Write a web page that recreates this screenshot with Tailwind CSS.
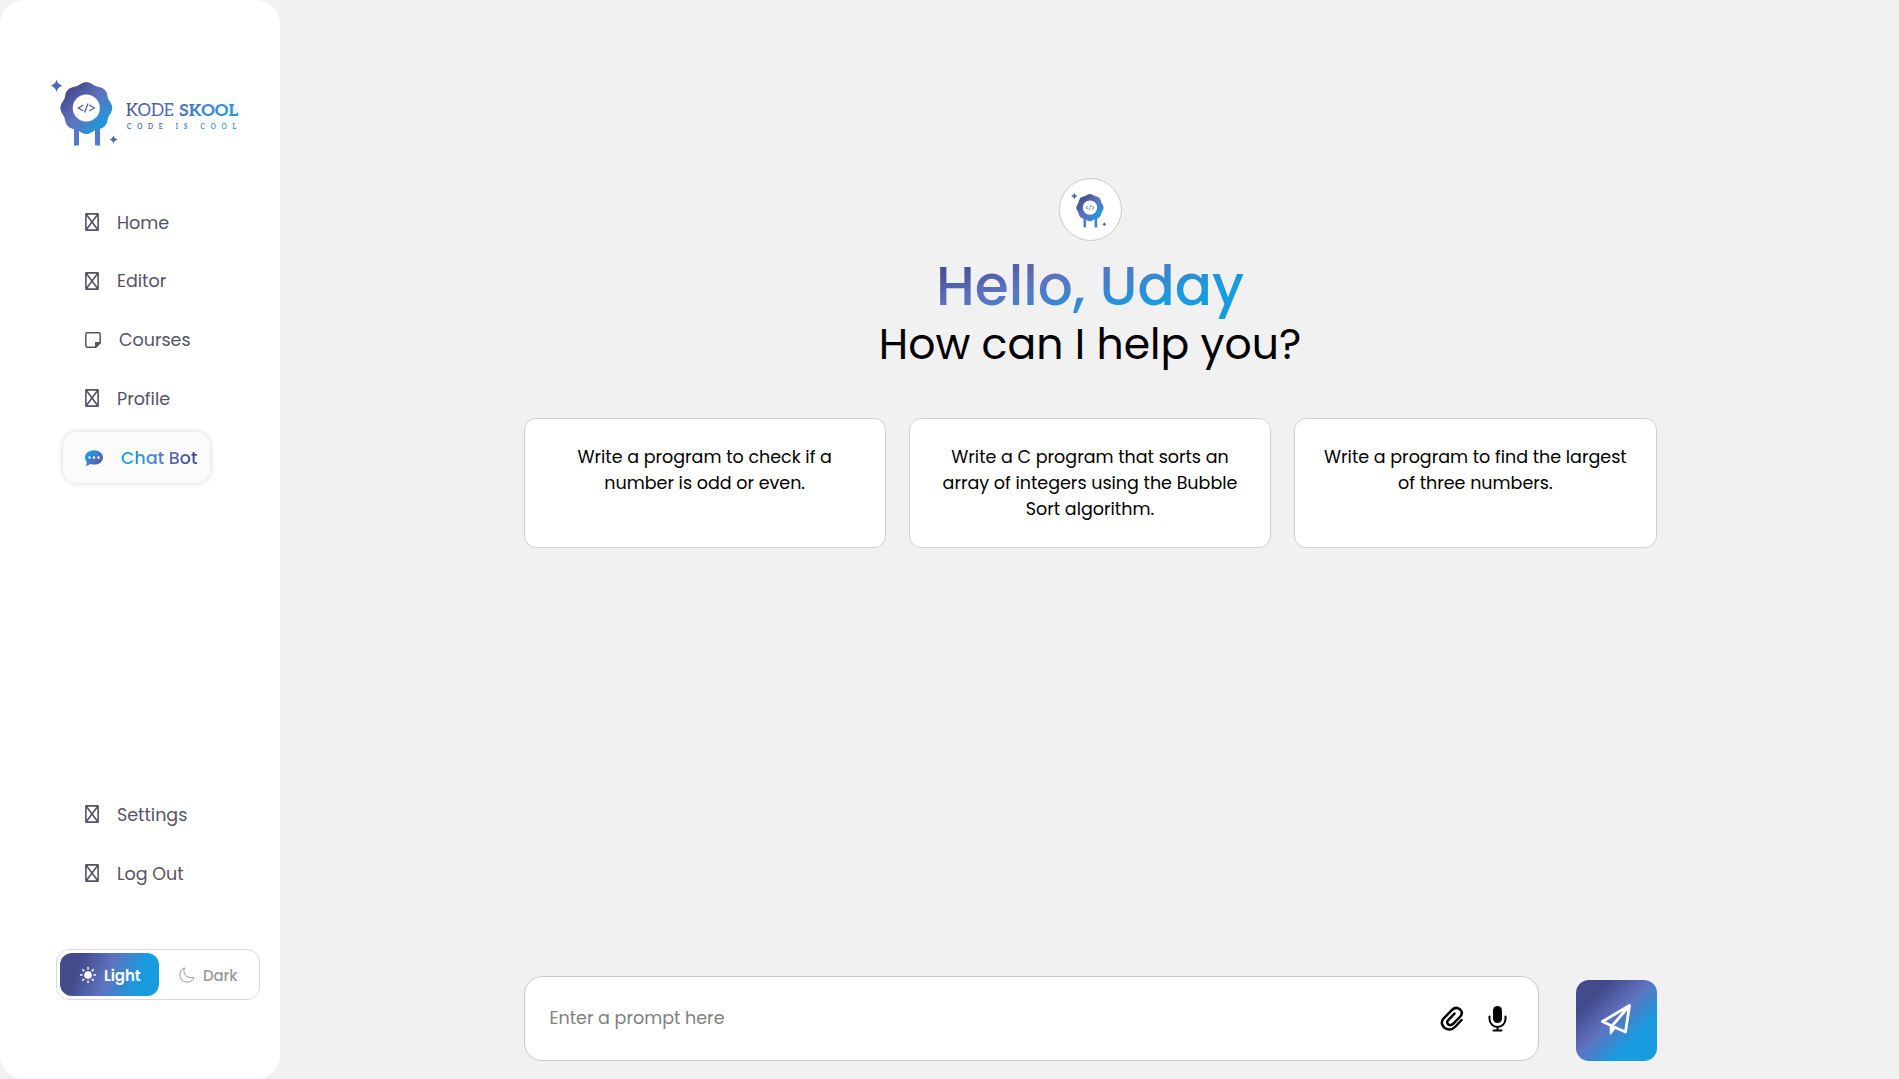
<!DOCTYPE html>
<html lang="en">
<head>
<meta charset="utf-8">
<title>Kode Skool</title>
<script src="https://cdn.jsdelivr.net/npm/@tailwindcss/browser@4"></script>
</head>
<body class="h-screen overflow-hidden bg-[#f1f1f1] font-['Poppins','Inter',sans-serif] text-black">
<svg class="absolute h-0 w-0">
  <defs>
    <linearGradient id="g" x1="0" y1="0" x2="1" y2="1"><stop offset=".15" stop-color="#434b8c"/><stop offset=".5" stop-color="#5f72bf"/><stop offset=".85" stop-color="#189bdf"/></linearGradient>
    <linearGradient id="gl" x1="0" y1="0" x2="1" y2="1"><stop offset="0" stop-color="#5f72bf"/><stop offset="1" stop-color="#4a7fd6"/></linearGradient>
    <linearGradient id="gt" gradientUnits="userSpaceOnUse" x1="126" y1="0" x2="238" y2="12"><stop offset="0" stop-color="#454e93"/><stop offset=".5" stop-color="#5270b9"/><stop offset="1" stop-color="#2b93dc"/></linearGradient>
    <linearGradient id="gc" x1="0" y1="0" x2="1" y2="1"><stop offset=".2" stop-color="#189bdf"/><stop offset=".6" stop-color="#5570bd"/><stop offset="1" stop-color="#434b8c"/></linearGradient>
    <g id="sheep">
      <path fill="url(#gl)" d="M-12.3 18h5v19.200l-5 .6zM8.700 18h5v19.800l-5-.6z"/>
      <path fill="url(#g)" d="M24.500-4.900Q27.500 0 24.500 4.900Q21.200 8.800 20.800 13.850Q19.450 19.450 13.850 20.800Q8.800 21.200 4.900 24.500Q0 27.500-4.900 24.500Q-8.800 21.200-13.850 20.800Q-19.450 19.450-20.800 13.850Q-21.200 8.800-24.500 4.900Q-27.500 0-24.500-4.900Q-21.200-8.800-20.800-13.850Q-19.450-19.450-13.850-20.800Q-8.800-21.200-4.900-24.500Q0-27.500 4.900-24.500Q8.800-21.200 13.850-20.800Q19.450-19.450 20.800-13.850Q21.200-8.800 24.500-4.900Z"/>
      <circle r="13.600" fill="#fff"/>
      <path fill="none" stroke="#4d61ad" stroke-width="1.300" d="M-3-3l-5 3 5 3M3-3l5 3-5 3M1.700-4.500l-3.400 9"/>
      <path fill="#4e66b4" d="M-29.800-28.500q1 5 6 6.200q-5 1.200-6 6.200q-1-5-6-6.200q5-1.200 6-6.200zM27.200 27.200q.7 3.500 4.300 4.300q-3.600.8-4.300 4.300q-.7-3.500-4.300-4.300q3.600-.8 4.300-4.300z"/>
    </g>
    <symbol id="tofu" viewBox="0 0 14 18"><path fill="none" stroke="#555268" stroke-width="1.600" stroke-linejoin="round" d="M.9.900h12.200v16.200H.9zM1 1l12 16M13 1L1 17"/></symbol>
  </defs>
</svg>
<div class="flex h-full">
  <aside class="flex w-[280px] shrink-0 flex-col rounded-3xl bg-white">
    <svg class="mt-[60px] h-[110px] w-[280px]" viewBox="0 60 280 110">
      <use href="#sheep" x="86.300" y="108"/>
      <g fill="url(#gt)" font-family="'Aleo','Roboto Slab','Zilla Slab','DejaVu Serif',serif">
        <text x="126" y="115.500" font-size="17" textLength="48" lengthAdjust="spacingAndGlyphs">KODE</text>
        <text x="179" y="115.500" font-size="17" font-weight="700" textLength="59" lengthAdjust="spacingAndGlyphs">SKOOL</text>
        <text x="127" y="128.700" font-size="6.500" font-weight="600" textLength="109">CODE IS COOL</text>
      </g>
    </svg>
    <nav class="mt-[27px] flex flex-col gap-[7.800px] pl-[62px] text-[17.500px] leading-[26px] text-[#555268]">
      <a class="flex h-[51px] items-center pl-[23px]"><svg class="-mt-px h-[18px] w-[14px]"><use href="#tofu"/></svg><span class="ml-[18px]">Home</span></a>
      <a class="flex h-[51px] items-center pl-[23px]"><svg class="-mt-px h-[18px] w-[14px]"><use href="#tofu"/></svg><span class="ml-[18px]">Editor</span></a>
      <a class="flex h-[51px] items-center pl-[23px]"><svg class="-mt-px size-4" viewBox="0 0 16 16" fill="none" stroke="#555268" stroke-width="1.500"><path d="M2.200.8h11.600q1.400 0 1.400 1.400v8.600l-4.400 4.400H2.200Q.8 15.200.8 13.800V2.200Q.8.800 2.200.800z"/><path fill="#555268" d="M10.800 15v-4.200H15z"/></svg><span class="ml-[18px]">Courses</span></a>
      <a class="flex h-[51px] items-center pl-[23px]"><svg class="-mt-px h-[18px] w-[14px]"><use href="#tofu"/></svg><span class="ml-[18px]">Profile</span></a>
      <a class="ml-px flex h-[51px] w-[147px] items-center rounded-[14px] bg-[#fbfbfb] pl-[22px] shadow-[0_0_5px_1px_rgba(0,0,0,0.13)]"><svg class="h-4 w-[18px]" viewBox="0 0 18 16"><path fill="url(#gc)" d="M9 .2C14 .2 18 3.300 18 7.400s-4 7.200-9 7.200q-1.900 0-3.600-.5Q3.400 15.900.3 15.900 1.700 14.300 1.900 12.200 0 10.200 0 7.400C0 3.300 4 .2 9 .2z"/><g fill="#fff"><circle cx="4.500" cy="7.500" r="1.200"/><circle cx="9" cy="7.500" r="1.200"/><circle cx="13.500" cy="7.500" r="1.200"/></g></svg><span class="ml-[18px] bg-linear-[100deg,#189bdf_15%,#5f72bf_60%,#434b8c_90%] bg-clip-text font-medium text-transparent">Chat Bot</span></a>
    </nav>
    <div class="mt-auto flex flex-col gap-[8px] pl-[62px] text-[17.500px] leading-[26px] text-[#555268]">
      <a class="flex h-[51px] items-center pl-[23px]"><svg class="-mt-px h-[18px] w-[14px]"><use href="#tofu"/></svg><span class="ml-[18px]">Settings</span></a>
      <a class="flex h-[51px] items-center pl-[23px]"><svg class="-mt-px h-[18px] w-[14px]"><use href="#tofu"/></svg><span class="ml-[18px]">Log Out</span></a>
    </div>
    <div class="mt-[50px] mb-[79px] ml-[56px] flex h-[51px] w-[204px] items-center rounded-[13px] border border-[#d9d9d9] p-[3px] text-[15px] leading-5">
      <div class="flex h-[43px] w-[99px] items-center rounded-[12px] bg-linear-[110deg,#434b8c_20%,#5f72bf_48%,#189bdf_78%] pl-5 font-semibold text-white">
        <svg class="size-4" viewBox="-8 -8 16 16"><circle r="3.800" fill="#fff"/><path stroke="#fff" stroke-width="1.500" d="M0-8v2.500M0 8V5.500M-8 0h2.500M8 0H5.500M-5.700-5.700l1.800 1.800M5.700-5.700L3.900-3.900M-5.700 5.700l1.800-1.800M5.700 5.700L3.900 3.900"/></svg>
        <span class="mt-0.5 ml-2 tracking-[-0.1px]">Light</span>
      </div>
      <div class="flex items-center pl-5 font-medium text-[#999]">
        <svg class="size-4" viewBox="0 0 16 16" fill="none" stroke="#999" stroke-width="1"><path d="M5.400.8Q3.800 4.500 6.200 7.800t9 2.900A7.500 7.500 0 1 1 5.400.8z"/></svg>
        <span class="mt-0.5 ml-2 tracking-[-0.1px]">Dark</span>
      </div>
    </div>
  </aside>
  <main class="flex flex-1 flex-col pr-[242.500px] pl-[243.500px]">
    <div class="mt-[178px] flex flex-col items-center">
      <div class="flex size-[63px] items-center justify-center rounded-full border border-[#c9c9c9] bg-white"><svg class="size-[61px]" viewBox="-57 -54.500 116 116"><use href="#sheep"/></svg></div>
      <h1 class="mt-[13px] text-[55px] leading-[64px] font-medium"><span class="inline-block bg-linear-[165deg,#434b8c_8%,#5f72bf_36%,#189bdf_71%] bg-clip-text pb-1 text-transparent">Hello, Uday</span></h1>
      <p class="text-[42.500px] leading-[44px]">How can I help you?</p>
    </div>
    <div class="mt-[52px] grid grid-cols-3 gap-[23px] text-center text-[17.500px] leading-[26px] whitespace-nowrap">
      <div class="h-[130px] rounded-[12px] border border-[#d0d0d0] bg-white pt-[25px]">Write a program to check if a<br>number is odd or even.</div>
      <div class="h-[130px] rounded-[12px] border border-[#d0d0d0] bg-white pt-[25px]">Write a C program that sorts an<br>array of integers using the Bubble<br>Sort algorithm.</div>
      <div class="h-[130px] rounded-[12px] border border-[#d0d0d0] bg-white pt-[25px]">Write a program to find the largest<br>of three numbers.</div>
    </div>
    <div class="mt-auto mb-[18px] flex items-center justify-between">
      <div class="flex h-[85px] w-[1015px] items-center rounded-[18px] border border-[#c9c9c9] bg-white pr-[31px] pl-[25px]">
        <span class="mr-auto text-[17.500px] text-[#808080]">Enter a prompt here</span>
        <svg class="h-[26px] w-[24px]" viewBox="0 0 24 26" fill="none" stroke="#000" stroke-width="2.500" stroke-linecap="round"><path d="M21.500 14L15.500 20.500C8.500 28 -2 19.500 3.300 12.800L12 3.800C17 -.8 25 4.500 20.500 10.300L13.200 17.800C9.800 20.800 5.300 17.600 8 14.300L14.500 7.700"/></svg>
        <svg class="ml-[23.500px] h-[26px] w-[19px]" viewBox="0 0 19 26"><rect x="5" width="9" height="17" rx="4.500"/><path fill="none" stroke="#000" stroke-width="2" stroke-linecap="round" d="M1.500 10.500V13a8 8 0 0 0 16 0v-2.500M9.500 21v3M5.500 24.500h8"/></svg>
      </div>
      <div class="mt-[4px] flex size-[81px] items-center justify-center rounded-[13px] bg-linear-[135deg,#434b8c_22%,#5f72bf_46%,#189bdf_72%]">
        <svg class="mb-1 size-8" viewBox="0 0 32 32" fill="none" stroke="#fff" stroke-width="2.800" stroke-linejoin="round"><path d="M2.500 18.500L29.500 2.500 25.500 29 12 23zM29.500 2.500L12 23"/><path fill="#fff" stroke-width="1.500" d="M10.500 23.500v7.200l4.500-5.500z"/></svg>
      </div>
    </div>
  </main>
</div>
</body>
</html>
